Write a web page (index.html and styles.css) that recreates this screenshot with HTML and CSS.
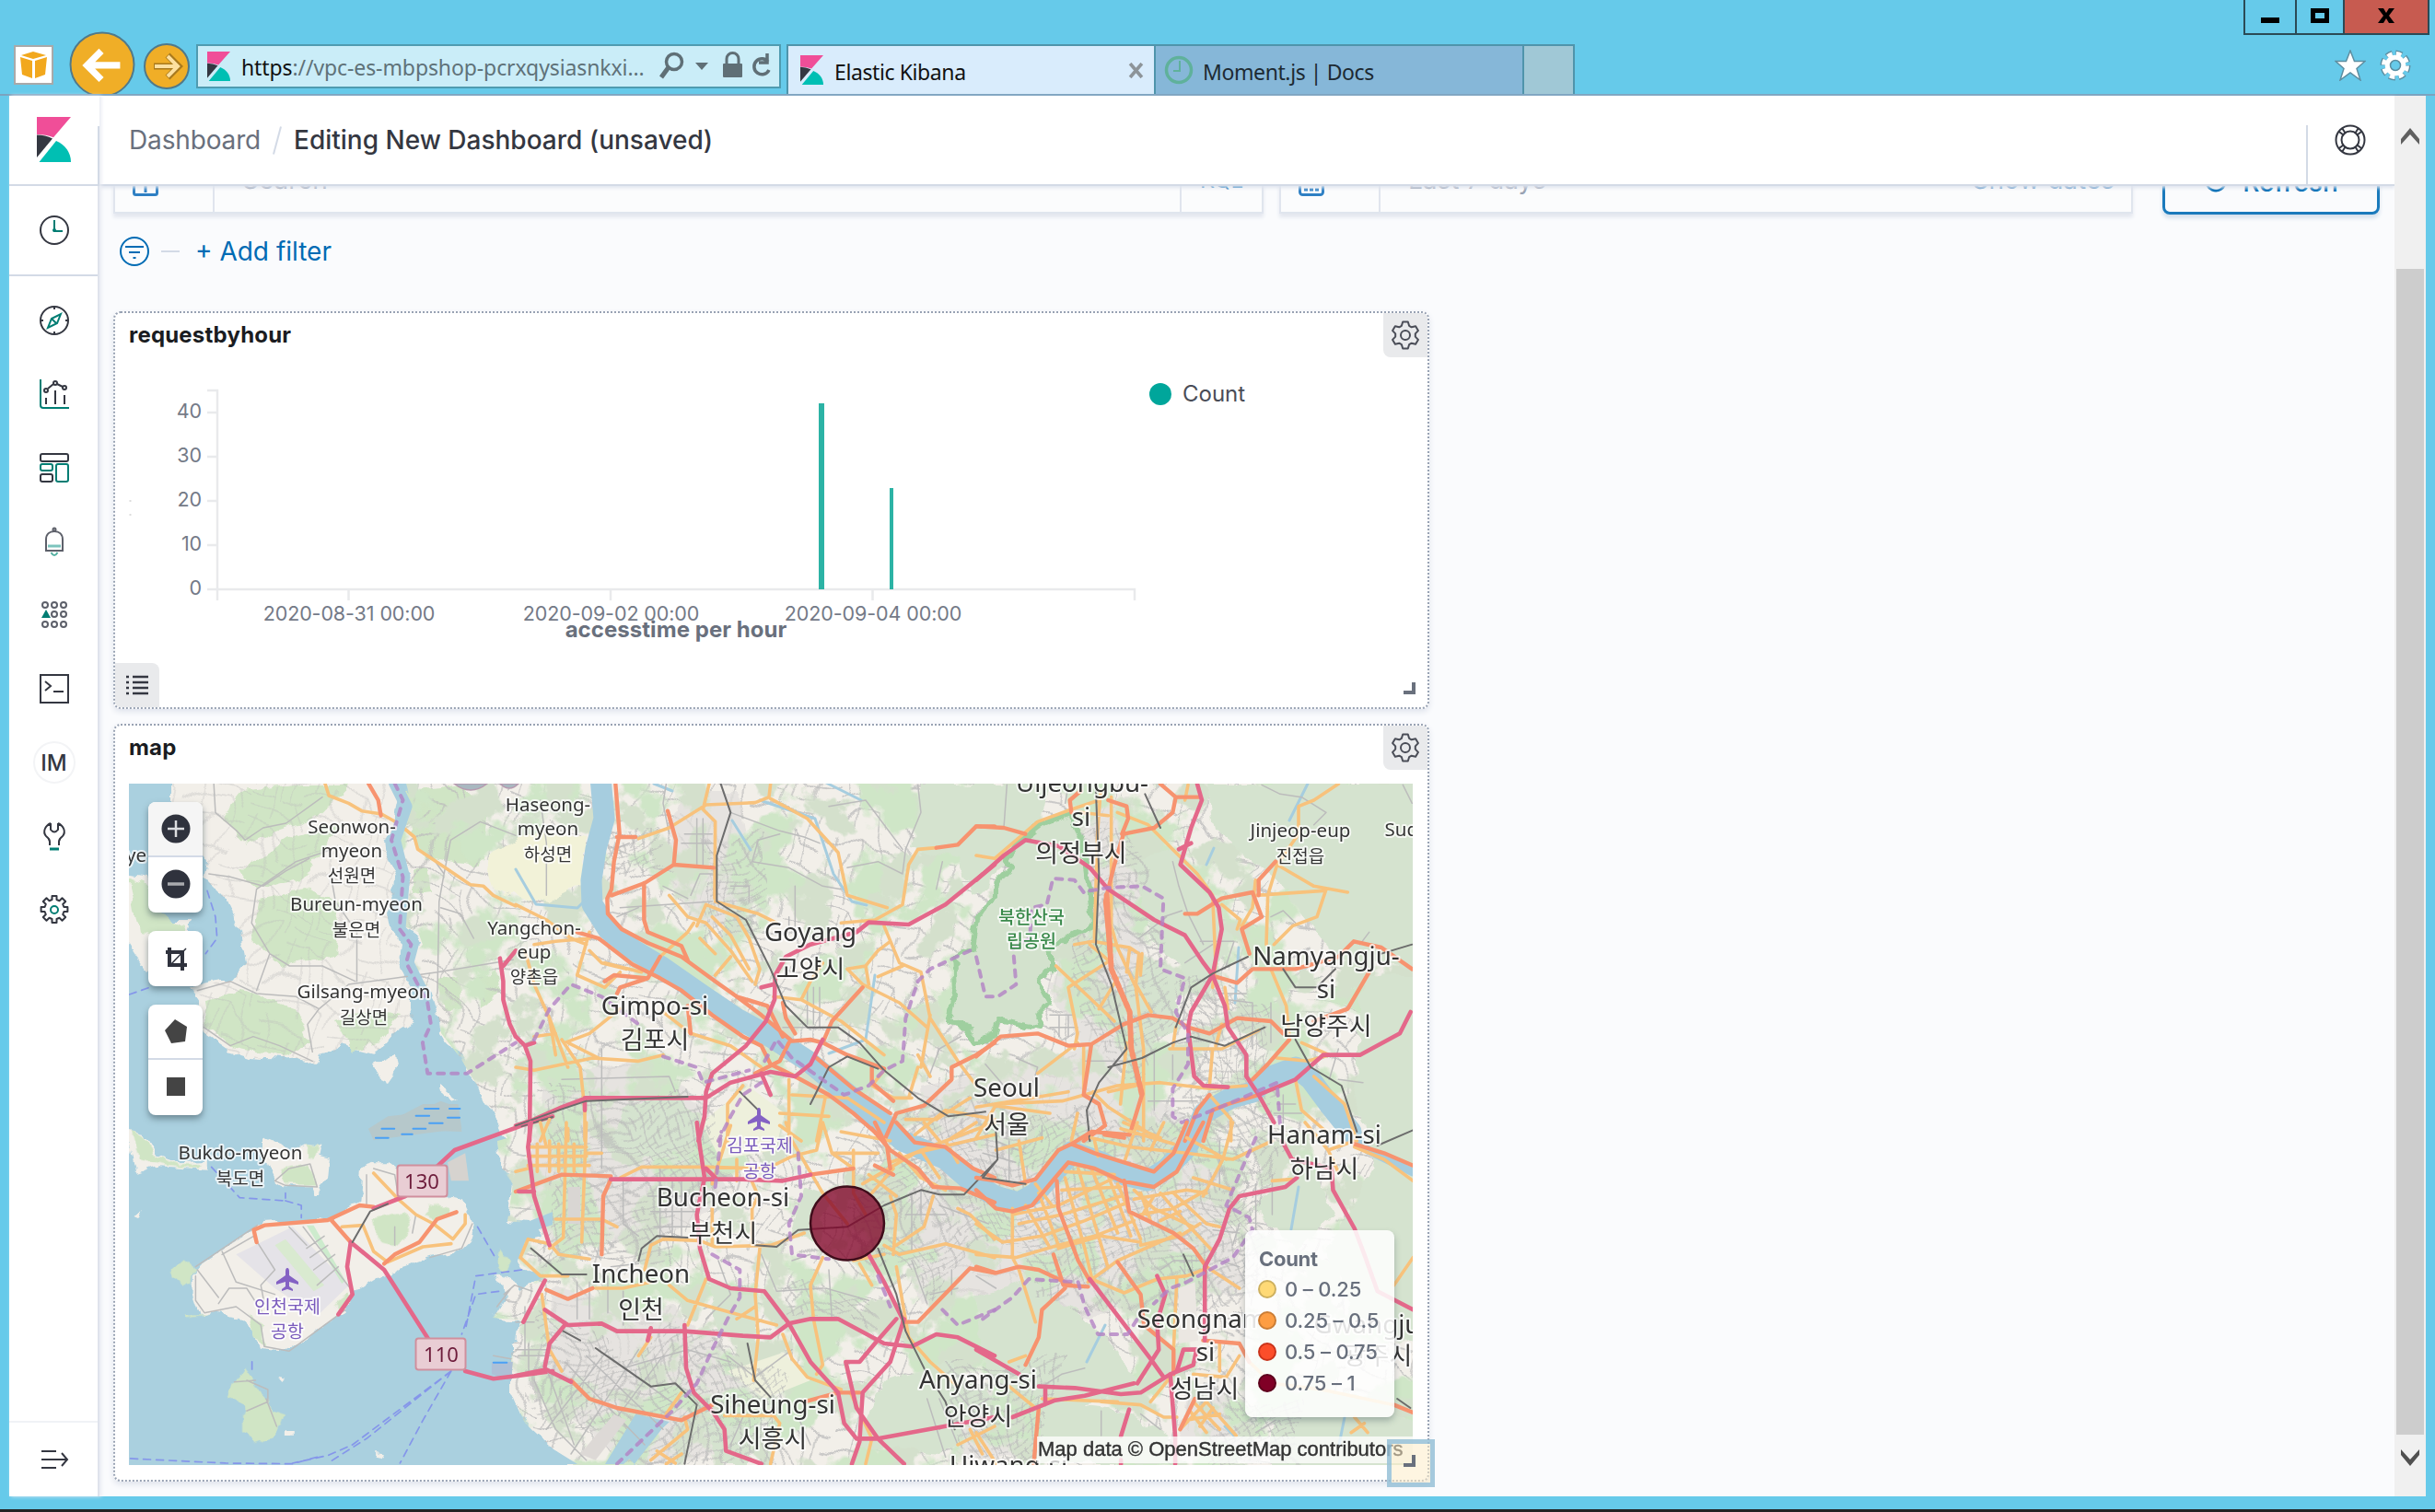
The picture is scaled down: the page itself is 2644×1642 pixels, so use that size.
FILE: index.html
```html
<!DOCTYPE html>
<html lang="en">
<head>
<meta charset="utf-8">
<title>Elastic Kibana</title>
<link rel="stylesheet" href="styles.css">
</head>
<body>
<svg class="defs" width="0" height="0" aria-hidden="true">
  <symbol id="kibana" viewBox="0 0 37 49" preserveAspectRatio="none">
    <path fill="#f04e98" d="M0 0H37L18 22.300Q9.500 19 0 19Z"/>
    <path fill="#343741" d="M0 19.500Q9.500 19.500 17 23.500L0 44Z"/>
    <path fill="#00bfb3" d="M21 26C31 30 37 39 37 49H2.500Z"/>
  </symbol>
  <symbol id="gear" viewBox="0 0 32 32">
    <g fill="none" stroke="#4a4d57" stroke-width="2" stroke-linejoin="round">
      <path d="M13.200 1.500h5.600l1.300 4.300 2.600 1.500 4.400-1 2.800 4.800-3.100 3.300v3.200l3.100 3.300-2.800 4.800-4.400-1-2.600 1.500-1.300 4.300h-5.600l-1.300-4.300-2.600-1.500-4.400 1-2.800-4.800 3.100-3.300v-3.200L2.100 11.100l2.800-4.800 4.400 1 2.600-1.500z"/>
      <circle cx="16" cy="16" r="5"/>
    </g>
  </symbol>
</svg>

<header class="titlebar">
  <svg class="aws" viewBox="0 0 43 43"><rect x="1" y="1" width="41" height="41" fill="#fff" stroke="#a9a9a9" stroke-width="2"/><path fill="#f2a81d" d="M8 11l13-4 14 4-14 4zM7 13l13 4v19L9 32zM36 13l-13 4v19l11-4z"/></svg>
  <svg class="back" viewBox="0 0 74 70"><circle cx="37" cy="37" r="35.500" fill="#f0ae27" stroke="#50798a" stroke-width="2"/><path d="M57 38H22M36 22L20 38l16 16" fill="none" stroke="#fff" stroke-width="7.500"/></svg>
  <svg class="forward" viewBox="0 0 50 52"><circle cx="25" cy="26" r="24" fill="#f0ae27" stroke="#50798a" stroke-width="2"/><path d="M11 26h25M26 14l12 12-12 12" fill="none" stroke="#a8791d" stroke-width="7"/><path d="M12 26h25M26 15l11 11-11 11" fill="none" stroke="#fde0a0" stroke-width="4"/></svg>
  <div class="address">
    <svg class="fav"><use href="#kibana"/></svg>
    <span class="url"><b>https</b>://vpc-es-mbpshop-pcrxqysiasnkxi...</span>
    <svg class="tools" viewBox="0 0 124 34" fill="none" stroke="#5f6f76">
      <circle cx="16" cy="12" r="8.500" stroke-width="3.500"/><path d="M10 18L2 29" stroke-width="5"/>
      <path d="M39 13h14l-7 8z" fill="#5f6f76" stroke="none"/>
      <rect x="69" y="14" width="21" height="15" rx="1" fill="#5f6f76" stroke="none"/><path d="M73 15V9a6.500 6.500 0 0 1 13 0v6" stroke-width="3"/>
      <path d="M118 12a8.500 8.500 0 1 0 1 9M117 3v10h-9" stroke-width="3.500"/>
    </svg>
  </div>
  <nav class="tabs">
    <div class="tab active"><svg class="fav"><use href="#kibana"/></svg><span>Elastic Kibana</span><svg class="close" viewBox="0 0 16 16"><path d="M2 1l12 14M14 1L2 15" stroke="#8d9499" stroke-width="3.500"/></svg></div>
    <div class="tab"><svg class="moment" viewBox="0 0 32 32" fill="none" stroke="#5fb19b"><circle cx="16" cy="16" r="13.500" stroke-width="3.500"/><path d="M17 6v11h-7" stroke-width="2"/></svg><span>Moment.js | Docs</span></div>
    <div class="newtab"></div>
  </nav>
  <div class="corner">
    <div class="winbtns">
      <span><svg viewBox="0 0 22 18"><path d="M1 11h20v6H1z"/></svg></span>
      <span><svg viewBox="0 0 22 18"><path d="M1 1h20v16H1zM6 6v6h10V6z" fill-rule="evenodd"/></svg></span>
      <span class="x"><svg viewBox="0 0 22 18"><path d="M2 1h6l3 5 3-5h6l-6 8 6 8h-6l-3-5-3 5H2l6-8z"/></svg></span>
    </div>
    <div class="tools2">
      <svg viewBox="0 0 34 34"><path d="M17 1l4.500 11.500H33l-9 8 4 12.500-11-8-11 8 4-12.500-9-8h11.500z" fill="#fff" stroke="#5d8ea1" stroke-width="1.500"/></svg>
      <svg viewBox="0 0 34 34"><circle cx="17" cy="17" r="13" fill="none" stroke="#5d8ea1" stroke-width="7" stroke-dasharray="6.500 3.710"/><circle cx="17" cy="17" r="12.500" fill="none" stroke="#fff" stroke-width="5" stroke-dasharray="5.500 4.317" stroke-dashoffset="-.5"/><circle cx="17" cy="17" r="8.500" fill="none" stroke="#fff" stroke-width="5.500"/><circle cx="17" cy="17" r="5.500" fill="#66caea" stroke="#5d8ea1" stroke-width="1.500"/></svg>
    </div>
  </div>
</header>

<div class="window">
  <aside class="sidebar">
    <div class="logo"><svg><use href="#kibana"/></svg></div>
    <div class="recent"><svg viewBox="0 0 32 32" fill="none" stroke="#343741" stroke-width="2"><circle cx="16" cy="16" r="15"/><path d="M16 5v12h9" stroke="#017d73"/><circle cx="16" cy="16" r="2" fill="#017d73" stroke="none"/></svg></div>
    <div class="apps">
      <svg viewBox="0 0 32 32" fill="none" stroke="#343741" stroke-width="2"><circle cx="16" cy="16" r="15"/><path d="M16 1v3M16 28v3M1 16h3M28 16h3"/><path d="M23 9l-4 10-10 5 4-10zM13 14l5 5" stroke="#017d73"/></svg>
      <svg viewBox="0 0 32 32" fill="none" stroke="#343741" stroke-width="2"><path d="M1 0v28q0 3 3 3h28" stroke="#017d73"/><circle cx="7" cy="12" r="2"/><circle cx="17" cy="4" r="2"/><circle cx="27" cy="9" r="2"/><path d="M9 10l6-5M19 5l6 3M7 20v7M17 12v15M27 17v10"/></svg>
      <svg viewBox="0 0 32 32" fill="none" stroke="#343741" stroke-width="2"><rect x="1" y="1" width="30" height="8" rx="2"/><rect x="1" y="12" width="13" height="7" rx="2" stroke="#017d73"/><rect x="18" y="12" width="13" height="19" rx="2" stroke="#017d73"/><rect x="1" y="23" width="13" height="8" rx="2"/></svg>
      <svg viewBox="0 0 32 32" fill="none" stroke="#5d606a" stroke-width="2"><path d="M6 26h20M7 26V14C7 8 11 5 16 5s9 3 9 9v12"/><circle cx="16" cy="3" r="1.500"/><path d="M9 21h14" stroke="#7cc4bd" stroke-width="3"/><path d="M12.500 28q3.500 6 7 0" stroke="#4fae9f"/></svg>
      <svg viewBox="0 0 32 32" fill="none" stroke="#5d606a" stroke-width="2"><circle cx="6" cy="5" r="3"/><circle cx="16" cy="5" r="3"/><circle cx="26" cy="5" r="3"/><circle cx="16" cy="15" r="3"/><circle cx="26" cy="15" r="3"/><circle cx="6" cy="26" r="3"/><circle cx="16" cy="26" r="3"/><circle cx="26" cy="26" r="3"/><path d="M7 10l5 9H2z" fill="#017d73" stroke="none"/></svg>
      <svg viewBox="0 0 32 32" fill="none" stroke="#343741" stroke-width="2"><rect x="1" y="1" width="30" height="30"/><path d="M6 8l6 5-6 5M15 19h11"/></svg>
      <div class="avatar">IM</div>
      <svg viewBox="0 0 32 32" fill="none" stroke="#343741" stroke-width="2"><path d="M12 2C6 5 3 11 7 16q4 3 4 6v4M20 2c6 3 9 9 5 14q-4 3-4 6v4M12 2v7q4 5 8 0V2"/><path d="M11 30h10" stroke="#017d73" stroke-width="3"/></svg>
      <svg viewBox="0 0 32 32" fill="none" stroke="#343741" stroke-width="2" stroke-linejoin="round"><path d="M13.500 1h5v4l3 1.200 3-2.900 3.700 3.700-3 3 1.200 3h4v5h-4l-1.200 3 3 3-3.700 3.700-3-2.900-3 1.200v4h-5v-4l-3-1.200-3 2.900L3.800 24l3-3-1.200-3h-4v-5h4l1.200-3-3-3 3.700-3.700 3 2.900 3-1.200z"/><circle cx="16" cy="16" r="4" stroke="#017d73"/></svg>
    </div>
    <div class="expand"><svg viewBox="0 0 32 24" fill="none" stroke="#343741" stroke-width="2"><path d="M2 3h16M2 12h27M2 21h16M24 5l6 7-6 7"/></svg></div>
  </aside>

  <div class="app">
    <div class="topnav">
      <div class="crumbs"><span class="c1">Dashboard</span><i></i><span class="c2">Editing New Dashboard (unsaved)</span></div>
      <div class="help"><svg viewBox="0 0 34 34" fill="none" stroke="#343741" stroke-width="2"><circle cx="17" cy="17" r="15.500"/><circle cx="17" cy="17" r="9.500"/><path d="M8 4l4 6M5 8l5 4M26 4l-4 6M29 8l-5 4M8 30l4-6M5 26l5-4M26 30l-4-6M29 26l-5-4"/></svg></div>
    </div>
    <main class="content">
      <div class="querybar">
        <div class="field query"><div class="cell ic"><svg viewBox="0 0 28 30" fill="none" stroke="#2e80c4" stroke-width="3"><rect x="1.500" y="1.500" width="25" height="27" rx="2"/><path d="M14 18v8"/></svg></div><div class="cell grow">Search</div><div class="cell kql">KQL</div></div>
        <div class="field date"><div class="cell ic"><svg viewBox="0 0 28 30" fill="none" stroke="#2e80c4" stroke-width="3"><rect x="1.500" y="1.500" width="25" height="27" rx="3"/><path d="M6 23h16" stroke-dasharray="4 2"/></svg></div><div class="cell grow">Last 7 days</div><div class="show">Show dates</div></div>
        <div class="refresh"><svg viewBox="0 0 30 30" fill="none" stroke="#006bb4" stroke-width="3"><path d="M25 9a12 12 0 1 0 2 8"/></svg>Refresh</div>
      </div>
      <div class="filters">
        <svg viewBox="0 0 32 32" fill="none" stroke="#006bb4" stroke-width="2"><circle cx="16" cy="16" r="15"/><path d="M6 11h20M10 17h12M14.500 23h3"/></svg>
        <i></i><span>+ Add filter</span>
      </div>

      <section class="panel chart">
        <header><h2>requestbyhour</h2><button><svg><use href="#gear"/></svg></button></header>
        <svg class="plot" viewBox="125 388 1422 380">
          <g fill="none" stroke="#e9eaec" stroke-width="2.500"><path d="M225 424H236V652M225 448h11M225 496h11M225 544h11M225 592h11M225 640H1232V652M378.500 640v12M663 640v12M947.500 640v12"/></g>
          <g fill="#2cb3a5"><path d="M889 438h6v202h-6zM966 530h4v110h-4z"/></g>
          <g class="tick" text-anchor="end"><text x="219" y="454">40</text><text x="219" y="502">30</text><text x="219" y="550">20</text><text x="219" y="598">10</text><text x="219" y="646">0</text></g>
          <g class="tick" text-anchor="middle"><text x="379" y="674">2020-08-31 00:00</text><text x="663.500" y="674">2020-09-02 00:00</text><text x="948" y="674">2020-09-04 00:00</text></g>
          <text class="axis" x="734" y="692" text-anchor="middle">accesstime per hour</text>
          <circle cx="1260" cy="428" r="12" fill="#00a69b"/><text class="leg" x="1284" y="436">Count</text>
          <path d="M141.500 543v2M141.500 558v2" stroke="#ddd" stroke-width="2"/>
        </svg>
        <div class="listbtn"><svg viewBox="0 0 26 24" stroke="#343741" stroke-width="2.500"><path d="M1 3h3M8 3h17M1 9h3M8 9h17M1 15h3M8 15h17M1 21h3M8 21h17"/></svg></div>
        <div class="grip"></div>
      </section>

      <section class="panel geo">
        <header><h2>map</h2><button><svg><use href="#gear"/></svg></button></header>
        <div class="mapbox">
        <svg class="map" viewBox="140 852 1394 740">
          <defs>
            <clipPath id="land"><path id="mainland" d="M441 852L446 870 437 893 432 913 434 933 443 950 445 970 437 993 439 1007 454 1013 459 1027 446 1040 454 1063 468 1077 475 1100 479 1123 500 1150 514 1173 529 1200 546 1217 539 1210 551 1237 540 1240 543 1267 557 1287 551 1327 582 1330 590 1345 570 1350 562 1373 590 1388 566 1400 540 1385 548 1410 535 1432 565 1435 562 1458 555 1460 555 1513 570 1547 597 1572 623 1592H1534V852Z"/></clipPath>
            <clipPath id="isle"><path d="M186 852L421 852 434 870 429 893 418 913 420 930 430 950 429 970 421 993 425 1013 434 1030 432 1043 437 1057 448 1077 448 1093 450 1110 429 1123 418 1137 407 1145 368 1135 364 1143 345 1147 341 1157 325 1150 307 1152 271 1150 250 1143 221 1123 214 1090 204 1075 237 1067 250 1067 266 1047 261 1013 246 980 221 955 225 937 214 913 186 875Z"/></clipPath>
            <filter id="woods" x="0" y="0" width="100%" height="100%" color-interpolation-filters="sRGB"><feTurbulence type="fractalNoise" baseFrequency=".014" numOctaves="5" seed="7"/><feColorMatrix values="0 0 0 0 .81  0 0 0 0 .90  0 0 0 0 .78  14 0 0 0 -7.300"/></filter>
            <filter id="woods2" x="0" y="0" width="100%" height="100%" color-interpolation-filters="sRGB"><feTurbulence type="fractalNoise" baseFrequency=".022" numOctaves="5" seed="21"/><feColorMatrix values="0 0 0 0 .83  0 0 0 0 .88  0 0 0 0 .80  14 0 0 0 -7.700"/></filter>
            <filter id="rough" x="-5%" y="-5%" width="110%" height="110%"><feTurbulence type="fractalNoise" baseFrequency=".05" numOctaves="3" seed="3"/><feDisplacementMap in="SourceGraphic" scale="14" xChannelSelector="R" yChannelSelector="G"/></filter>
            <filter id="warp" x="0" y="0" width="100%" height="100%"><feTurbulence type="fractalNoise" baseFrequency=".012" numOctaves="2" seed="9"/><feDisplacementMap in="SourceGraphic" scale="70" xChannelSelector="R" yChannelSelector="G"/></filter>
            <pattern id="streets" width="78" height="66" patternUnits="userSpaceOnUse" patternTransform="rotate(14)"><path d="M0 8H40L52 20H78M0 34H30M44 40H78M12 0V34M30 20V66M58 0V40M0 54H58V66M68 40V66M40 8V40" fill="none" stroke="#bdbdbd" stroke-width="1.300"/></pattern>
            <pattern id="blocks" width="29" height="25" patternUnits="userSpaceOnUse" patternTransform="rotate(-22)"><path d="M0 4H29M0 12H17M10 19H29M6 0V25M17 4V19M24 0V12" fill="none" stroke="#b9b9b9" stroke-width="1.200"/></pattern>
            <path id="plane" d="M0-12q2 0 2 4v4l10 7v3L2 3v5l4 3v2L0 11l-6 2v-2l4-3V3l-10 3V3l10-7v-4q0-4 2-4z" fill="#8461c4"/>
          </defs>
          <rect x="140" y="852" width="1394" height="740" fill="#aad0df"/>
          <g fill="#f2efe9" filter="url(#rough)">
            <path d="M441 845L446 870 437 893 432 913 434 933 443 950 445 970 437 993 439 1007 454 1013 459 1027 446 1040 454 1063 468 1077 475 1100 479 1123 500 1150 514 1173 529 1200 551 1237 540 1240 543 1267 557 1287 551 1327 582 1330 590 1345 570 1350 562 1373 590 1388 566 1400 540 1385 548 1410 535 1432 565 1435 562 1458 555 1460 555 1513 570 1547 597 1572 623 1600H1550V840Z"/>
            <path d="M186 840L421 840 434 870 429 893 418 913 420 930 430 950 429 970 421 993 425 1013 434 1030 432 1043 437 1057 448 1077 448 1093 450 1110 429 1123 418 1137 407 1145 368 1135 364 1143 345 1147 341 1157 325 1150 307 1152 271 1150 250 1143 221 1123 214 1090 204 1075 237 1067 250 1067 266 1047 261 1013 246 980 221 955 225 937 214 913 186 875Z"/>
            <path d="M135 950L160 955 175 1000 208 1000 205 1015 160 1055 148 1040 135 1020ZM403 1157L430 1145 432 1160 420 1177 410 1172ZM478 1178l20 14-6 2-14-10z"/>
            <g transform="translate(0 1200) scale(.3827 .3333)">
              <path d="M551 535L740 390 940 375 1020 320 1030 210 1060 190 1100 190 1150 230 1270 300 1310 310 1345 390 1330 440 1290 485 1220 500 1140 530 1070 570 1000 620 980 670 820 805 740 795 720 740 670 690 620 680 570 690 550 620Z"/>
              <path d="M350 80L410 95 440 160 510 190 590 185 590 215 450 205 385 230 367 130ZM750 110L790 130 820 160 870 130 905 140 900 170 935 180 930 240 905 255 915 300 895 300 880 265 800 265 780 250 750 180ZM380 360l30-14-14 22zM815 1065h18v18h-18zM1075 1140l20 4-6 12-16-4zM792 890l24 6-16 6z"/>
            </g>
          </g>
          <g fill="#d0e5c5" filter="url(#rough)">
            <path d="M238 890L262 860 330 852H380L345 890 300 905 268 920 245 895ZM262 945l60-38 50-12-45 60-50 14zM280 980l50-14 40 14-6 60-56 10-34-30zM223 1085l40-8 60 20 15 35-30 18-60-14-22-20zM365 1110l40-12 30 6-22 30-30 8zM440 860l60-8 30 30-10 60-60-10-18-38zM448 945l16 0 4 25-18 2zM475 1065l24-4 2 35-20 4zM140 955l20 6 10 30 34 16-4 18-50-10zM519 1060l20-4 4 20-20 20z"/>
            <g transform="translate(0 1200) scale(.3827 .3333)"><path d="M370 85l40 15 20 60 80 35 60 0-10 15-90-10-80-20zM870 130l30 10-10 40-20-10zM800 210l80-20 15 70-85 0zM490 540l30-30 30 25-5 40-30 15-20-20zM530 685l60 0-60 10zM690 860l25 40 45 60 10 40 40 15-10 35-25 35-50 20-35-40 0-70-25-30-20-5 20-50zM1060 370l90-20 20 60-40 45-60-10zM700 680l50 40 5 70-30-30zM945 650l35-30 10 25-30 20zM1210 320l60 20-20 40-40-20zM1410 490l15-20 20 40-15 40-20-15z"/></g>
          </g>
          <g clip-path="url(#land)">
            <g clip-path="url(#land)"><rect x="100" y="800" width="1480" height="840" fill="url(#streets)" filter="url(#warp)"/></g>
            <g fill="#e2dfdc" opacity=".7" filter="url(#rough)"><path d="M590 1170l120-20 60 60 20 90-60 40-130 20-30-60zM600 1400l130 20 110 90-40 70-120 10-90-80zM740 860l60 0 20 130-60 20-40-60zM1000 1180l180-40 140 100 30 160-230 40-110-80zM1170 870l60 0 20 250-50 60-60-100zM960 1280l100 20 50 100-110 20zM1040 1500l80 20 0 60-90 10zM1290 1500l60 20 20 70-90-10z"/></g>
            <rect x="140" y="840" width="1400" height="760" filter="url(#woods)"/>
            <rect x="140" y="840" width="1400" height="760" filter="url(#woods2)"/>
            <g fill="#d5e3cf" filter="url(#rough)">
              <path d="M1000 852h140l-20 60-60 60-20-40-50-10zM1230 940l50-20 60 100-30 60-60-60zM1240 1040l40 20 0 60-40 20-20-60zM1310 852h230v200l-90-10-60-80-70-60zM1480 1060h60v400l-70-30-30-70 50-90-20-90zM1360 1310l60-50 30 60-40 40zM1060 1410l60-20 80 60 40 60-80 20-90-30zM960 1500l70-20 50 40-60 60-90-10zM1130 1520l80 10 60 30-10 30h-130zM680 1200l60-10 30 40-60 30-50-10zM770 1390l50 20 0 50-40-10zM1380 1530l80-20 80 40v50h-160zM870 1290l30 10-10 50-30-10zM760 1550l50 0 10 40h-40z"/>
            </g>
            <path d="M525 932l60-30 50 10 0 50-40 20-60-14z" fill="#f2f2d8" filter="url(#rough)"/>
            <path d="M762 1220l50-40 40 30-10 40-60 10zM790 1490l60-20 30 30-50 20z" fill="#eef0dc"/>
            <g filter="url(#warp)"><path d="M600 1190h180v120h-60v70h-120zM730 1440l140 60-30 90h-150l-90-90zM960 1200h230v160h-140l-40 60-80-80zM1090 1220h290v200h-260zM1170 900h60l40 220-40 60-60-60zM1270 1080h120v180h-80zM1040 1480h110v110h-110zM1310 1510h110v90h-110zM770 900h60v120h-60zM580 1430l70 20 60 120h-70l-70-60zM860 1400h80v40h-80zM660 900h60v60h-60z" fill="url(#blocks)"/></g>
          </g>
          <g clip-path="url(#isle)"><rect x="100" y="800" width="500" height="400" fill="url(#streets)" filter="url(#warp)" opacity=".45"/></g>
          <path d="M1080 973L1062 1000 1057 1030 1035 1040 1037 1075 1030 1113 1050 1117 1060 1132 1080 1125 1085 1108 1130 1117 1127 1103 1140 1090 1128 1067 1140 1053 1140 1037 1163 1017 1187 1003 1183 967 1178 930 1163 883 1127 897 1110 910 1090 937 1100 943 1080 963Z" fill="#d3e2cd" stroke="#9fcf9f" stroke-width="6" stroke-linejoin="round" filter="url(#rough)"/>
          <g class="ln water">
            <path class="han" d="M652 845L656 890 647 923 642 957 643 983 660 1010 687 1032 717 1050 760 1080 800 1107 837 1127 877 1153 913 1183 950 1213 980 1240 1027 1260 1053 1283 1081 1300 1106 1307 1124 1297 1146 1273 1164 1252 1196 1263 1221 1277 1246 1283 1267 1270 1289 1247 1303 1220 1307 1210 1337 1193 1360 1187 1380 1170 1407 1160 1423 1173 1443 1200 1467 1230"/>
            <path stroke-width="9" d="M1465 1225L1485 1250 1534 1274"/>
            <path d="M560 945l22 38 45 4 14-14M710 852l20 8M795 892l20 32M825 870l60 20 20 60 20 30 16 4M950 1060l-10 70-40 15M1420 852l-20 40M1310 940l8-18M1345 1030l-4 60M1410 1290l-8 46M1200 1440l-20 40M1330 1550l10 10M1460 1540l-6 30M885 845l50 25"/>
          </g>
          <path d="M690 1592l-10-10 14-44 30 8-36 46zM560 1333l40-16 0 14-30 10zM560 1532l14 30-14 0z" fill="#aad0df"/>
          <path d="M560 1530L567 1543 593 1570 627 1591 560 1591ZM657 1591L690 1537 727 1545 677 1591Z" fill="#aad0df"/>

          <g class="ln" transform="translate(0 780) scale(.35714 .33333)">
            <path class="minor" d="M650 215L655 310 720 370 745 400 800 360 870 345 980 260M635 510L700 520 800 550 870 500 940 460M780 560L765 670 820 770 880 810 980 810 1080 860M1085 700V860M820 770L780 890M600 890L700 860 780 900 900 910 970 950 1060 870 1200 850 1330 830 1560 790M1330 900L1335 600 1350 510 1310 450M1350 510L1370 400 1460 340 1568 385M1340 620L1400 640 1440 720M970 950L935 1000 950 1090M780 560L900 470 1010 430M620 1010L700 1070 770 1040 850 1070 950 1120M1085 700L1020 600 1010 540"/>
            <path class="yellow" d="M988 215L1000 255 1060 280 1100 305 1160 315 1210 345 1260 390 1270 430 1340 480 1430 545 1470 550 1500 580 1568 615"/>
            <path class="trunk" d="M1120 215L1150 270 1158 320"/>
            <path class="motor" d="M1520 785L1530 860V920L1550 1000 1568 1040M1568 760L1530 810"/>
            <path class="river2" d="M1200 215L1235 290 1200 400 1228 520 1215 690 1255 740 1240 800 1300 930"/>
            <path class="border" d="M1200 215L1225 270 1190 400 1225 520 1215 690 1250 740 1235 800 1300 930 1310 1000 1285 1060 1300 1160 1420 1160 1568 1060"/>
            <path class="ferry" d="M630 565L655 650 660 720 625 770M393 903L460 878"/>
            <path d="M1120 1340l60-40 80-10 80-40 50 20 14 80z" fill="#b6c8cb"/>
          </g>
          <g class="ln" transform="translate(0 1200) scale(.3827 .3333)">
            <path d="M1045 80L1100 60 1200 0H1300L1310 80 1140 105 1060 118Z" fill="#b6c8cb"/>
            <path d="M1270 190l50-30 10 90-50 0z" fill="#d6d3cf"/>
            <path d="M1395 840h60l-5 60-55-20z" fill="#aec0d6"/>
            <path class="mud" d="M1205 15h40M1275 15h30M1180 38h38M1270 44h34M1218 62h38M1083 80h36M1172 80h36M1066 110h36M1140 98h30M1400 842h38"/>
            <path d="M670 490L830 400 990 590 900 690 780 600Z" fill="#e5e3e8"/><path d="M780 460l30-20 110 150-30 20z" fill="#d9ead0"/><path d="M870 395l20 0 90 180-10 10z" fill="#cdebcd"/>
            <path class="minor" d="M555 530L730 395M560 540L620 630M555 560L555 640 580 680 670 660 740 720 750 790 820 805 980 670M630 480L670 580 780 620M620 650L650 600 700 600 745 680M730 450L780 540 740 590 750 650M860 400L1000 610M630 490L720 430M820 400l50 60M870 470l50-40M880 500l50-40M890 540l60-50M900 590l60-60M1040 230V330M1060 210L1120 230 1130 300M1120 400v60M1170 420l10-60M1220 500l90-30 30-80M700 900l60 30 0 40-60 30M665 905l60-5M755 960l30 90M780 250l40-40 60-15 20 75-90-5zM1500 780V880M1470 820H1568M1400 820l50 10M1430 620l30-30 50 20M1410 660l40-60"/>
            <path class="yellow" d="M1060 225L1130 310 1180 360 1230 390 1285 440 1320 390V360M970 400L1030 395 1060 480 1100 515 1200 465 1280 455"/>
            <path class="trunk" d="M728 450L720 410 750 395 930 378 1020 330 1060 335M940 378L995 450M1090 520L1120 490 1190 450 1240 375 1295 352"/>
            <path class="motor" d="M1568 40L1480 70 1290 150 1150 300 1060 340M995 450L985 530 1000 620 960 685M995 450L1090 540 1215 765M1320 870L1400 895 1470 885 1568 870"/>
            <path class="rail" d="M1568 42L1480 72M1100 325L1050 350 1000 450"/>
            <path class="ferry" d="M600 205L680 305 810 315V290M810 315L855 330V370M1355 400L1405 500M1480 540L1350 560 1320 740M1415 610L1350 620 1310 750M1280 870L1000 1110 930 1145 830 1170M1280 870L1040 1090 930 1170M1280 870L1200 1030 1135 1170M370 1155L640 1170 830 1172 900 1150M715 840V870"/>
          </g>

          <g class="ln" transform="translate(560 840) scale(.33333)">
            <path class="minor" d="M490 37L480 100 500 200M700 130L860 190 940 210 990 230M770 290L790 220 860 200M770 290L890 310 1000 370 1060 380M1020 110L1140 90 1260 250M1310 40L1320 130 1270 250 1260 330M1080 310L1180 290 1260 330M340 440L640 420M480 370L560 410M700 370H760V420M150 1000L500 990 520 1040M280 900V1190M330 470L400 440M910 370V500M890 470V500M1390 290L1370 380M870 830H1010M950 700V820M970 700V820M990 700V830M1450 860L1380 900 1350 980M550 200H640M540 230H640M590 150V300M610 150V300M570 400L600 330 640 330M320 250L370 230M100 400V230L80 90M0 900L60 870"/>
            <path class="yellow" d="M830 37L825 80 780 98 620 105 500 180 400 215M630 37L610 120 650 160 648 410M830 85L950 150 1050 260 1080 400 1210 440M1370 245L1310 250 1280 300 1260 430 1170 480 1060 490M500 400L560 470 620 490 700 580 770 680M590 500L620 430 720 470 760 540 795 640 780 690M600 540L650 590M650 420L790 460 850 490M580 490L560 520 470 600M640 470L700 530 760 640M700 600L650 660M840 730L930 740 1060 810 1200 920M1080 640L1130 690 1250 750 1340 830M1200 500L1250 620 1320 650 1350 800 1440 940 1500 1020M1080 640L1140 630 1180 580 1220 550M1140 630L1150 690M1180 665L1260 630M0 430L100 480 180 540 230 560M30 580L60 690 110 800 170 960M0 960L60 970 250 930 400 940 480 920M150 870L210 960 225 1100V1200M160 880L240 850 340 770M170 880L270 930M480 780L570 850 700 890 800 960M60 560L130 550 240 540M240 520L200 660 290 700 340 650M240 580L280 620 360 640M290 620L410 650M60 860L130 850M110 800L130 920M890 1000V1200M860 1110L1020 1120M900 1050L1080 1060 1200 1140M980 1200L1010 1050M1200 970L1160 1020 1230 1060 1290 1060M1310 960L1280 1060M1350 990L1310 920M1270 1130L1370 1130 1480 1060M1300 1180L1400 1100 1560 1130M1420 1190L1500 1140M80 1200L110 1130M170 1160V1200M690 1200V1080L740 1020M930 740L960 680 1000 620M1350 790L1320 960M860 1150L930 1200"/>
            <path class="trunk" d="M325 37L338 200 320 290 312 380 298 410 300 460 345 510 430 555 540 600 650 680 720 730 800 790 900 875 960 870 1000 880 1080 920 1200 965M312 400L420 360 515 300 645 310M515 300L522 220 495 125M418 360V480L430 520 540 565 560 610M200 520L270 540 380 625 470 670 540 710 640 790 740 860 800 890 830 950 910 990 1020 1050 1100 1110 1180 1180M470 600L430 670 340 700 330 720M430 670L320 660 290 680M560 760L570 850M330 210H390M1560 175H1500L1440 235 1370 245M1560 880L1500 920 1420 960V1000L1330 1085 1240 1110 1200 1200M890 880L860 940 780 980M720 730L820 760 870 860M980 930L1100 1030 1220 1110M1130 700L1030 810 1000 880M870 750L880 800 910 850M1160 960V1010L1230 1070"/>
            <path class="motor" d="M1560 300L1400 430 1280 495 1150 488 1110 520 960 560 880 600 845 660 843 740 815 810 750 890 640 980 620 1040 615 1120 595 1200M1000 870L960 950 910 990 830 975 700 1010 620 1060 230 1060 150 1090 60 1130 0 1150M0 860L30 890 48 940 45 1200M800 980L830 1050M800 700L840 690M225 1060V1100M30 890L60 880"/>
            <path class="rail" d="M668 37L700 130 655 270V420L750 480 830 640 880 760 950 830H1050L1120 880 1200 970 1310 1060 1410 1120 1530 1105M960 1080L1020 960 1080 925 1180 965M560 1056L230 1070 140 1100 0 1150M730 1040L790 1100"/>
            <path class="border" d="M1480 580L1350 640 1310 680 1270 800 1260 940 1200 970 1150 1020 1070 1050 900 930 850 870 800 960M480 925L590 960 610 1010 760 970M60 870L110 770 180 690 280 730 400 820M800 1010L740 1050 700 1120 660 1200"/>
          </g>

          <g class="ln" transform="translate(1060 840) scale(.33333)">
            <path class="minor" d="M100 40L90 180M300 40L290 100M640 290L660 370 690 460 740 560M610 470L670 450M530 540L620 470M930 40L990 70 1060 80 1140 130 1100 170M1390 40L1420 100M730 550H840L810 640M960 470L1000 450 1040 490M680 620L770 560M780 720H880M820 740L900 750V900M960 750V880M1180 1000L1260 1010M580 910V1100M640 920V1000M560 1070H720M130 930L200 960 180 1030M30 950L90 1020M240 790H320M240 830H330M270 790V860M300 790V860M980 1080H1040M970 1110H1060M1000 1050V1170M1280 520L1250 560M1150 1000L1180 900M430 800L470 850M350 940H480"/>
            <path class="yellow" d="M0 270L60 280 200 160 310 120 400 90M405 60L395 200 385 540M440 80V500L460 570 520 700 545 900V1200M460 130L560 170 650 260 720 330 770 400 780 620 770 700M320 560L380 550 500 570 530 590 520 690 570 780M260 630L450 810M440 610L300 700 330 850 320 900M370 560L440 620M500 570L490 650M540 590L535 660M460 670L400 770M1180 37L1100 90 1050 110V200L980 300 950 400 945 560M980 300L1100 370 1210 390M1140 380L1110 470 1030 500 970 560M910 400L1130 385M800 430L860 480 850 510M630 900L800 900 920 840M770 900L760 1020M960 640L1010 760 1020 860M330 880L200 980M0 1090L60 1080 280 1070 460 1020 600 1010 760 1030 880 1020M60 1080L300 1040M60 1085L240 1110M350 890V1040M430 1040L520 1020M1040 1000L1060 1100 1140 1170M1100 990L1200 1080 1240 1200M910 350L900 440 865 500M690 40L680 90M340 130L430 140M650 830L640 900M800 820L780 890M810 700L820 770M490 880L470 1080M380 1040L430 1090 570 1180M480 1140L600 1190M760 1050L830 1130V1200M980 930L1080 940 1150 920 1060 880M60 1090L0 1190M330 1110L310 1200"/>
            <path class="trunk" d="M0 175L90 180 160 200M310 130L305 90 340 60M600 37L650 80 640 130 580 180 480 200 450 300 420 420 440 640 500 780 505 900 540 1050 500 1180 380 1170M650 80H730M430 90L490 110 495 150 475 200M0 925L80 860 200 850 300 890 375 885 480 820 560 790 640 800 690 830 760 850 850 800 960 810 1000 850M375 885L350 1050 400 1080 420 1150 350 1200M680 460L720 460 800 410 900 390 930 470 865 510 890 590M975 290L920 350V400M780 665L850 685 900 640 1040 640 1180 600 1230 550 1320 570 1420 640M1280 650L1210 770 1100 810M1020 870L950 950 900 1000M680 1200L720 1100 760 1050M740 1200L770 1100 820 1080 920 1050"/>
            <path class="wide" d="M425 400L440 640 500 780 505 900 540 1050"/>
            <path class="motor" d="M720 37L735 90 700 180 665 300 760 390 790 440 800 510 770 660 700 780 690 830 710 990 740 1020 820 1025M0 350L90 270 160 220 270 240 370 310 430 380 580 480 680 530 740 620 770 660 810 760 820 830 880 920V990L920 1050 970 1140M920 1050L1040 1000 1130 920 1250 920 1380 850 1415 780M700 230L660 250"/>
            <path class="rail" d="M390 60L400 330 390 560 440 690 490 900 400 1010 360 1100 370 1200M885 600L770 655 700 700 650 830M540 930L640 880 700 860 810 890 940 830M540 930L430 960M1000 640L1040 700H1110L1170 640M1040 870L1090 960 1190 1020 1240 1170M550 70L600 180M1320 590L1420 560"/>
            <path class="border" d="M370 385L430 375 540 370 610 410 600 640 680 670 650 780 690 850V950L640 1030V1120L670 1140 820 1080 980 1010 990 1150M350 390L320 350 250 345 230 430 180 440 175 540 120 570 130 690 70 730H30L0 600"/>
          </g>

          <g class="ln" transform="translate(560 1220) scale(.33333)">
            <path class="minor" d="M280 0V150M350 180V330L400 370M470 150V400M510 180V370M540 180V370M430 240H600M440 290H590M450 340H590M310 470L400 460M660 450L700 560 620 640M800 430L850 550 1000 540M1020 480L1030 640M1010 540L1150 580M690 760L780 830 900 740M820 570L870 640M350 800L560 740 700 780M0 740H100M30 600V760M0 650H60M300 500V620M350 550V660M200 520V640M240 520V640M100 800L190 1050M60 840L130 1000 230 1100M160 780L420 1050M230 760L480 1000M300 760L520 920M400 740L180 1080M300 740L100 1000M480 760L300 1000M900 450L960 430M1290 230V420M1320 220V300M1380 270L1540 330M1270 300H1400M1290 450L1340 590M1420 480V560M1350 560L1440 540M1380 900L1440 1050M1340 900L1400 1090M1440 880L1540 1000M1380 1000L1540 900M700 1050L740 960M920 960L960 1050"/>
            <path d="M210 1080l110-130 40 20-100 130z" fill="#ddd9d6"/><path d="M170 210h40v120h-40z" fill="#d9d6d3"/>
            <path class="yellow" d="M15 440L40 380 110 395 140 430 240 445M15 440L80 500 170 500M110 410L155 375 165 0M230 0L215 390M40 80H230M40 110H230M40 140H240M70 70V160M110 60V160M140 70V160M190 70V160M0 160L40 150M80 0L100 80M230 100H280M130 315H280L330 340M340 180L410 145H620L820 150 900 110 980 90M420 480L440 400 480 380 600 385 650 405 830 400 940 360M500 530L560 580 740 630 850 660M620 510L560 660M700 10L640 200M760 170L790 240 770 280V400M795 410L780 560 790 700 775 840M780 600L720 640M870 690L900 770 950 830 1060 870M1000 440L960 530 970 640 1000 790 980 820M640 280V400M720 120V190M880 0L900 60 1000 230 1080 330M1000 0L1030 100 1100 150M980 90L1000 0M1100 90V230L1140 300M1220 130L1400 60 1560 0M1130 200L1300 100 1560 40M1160 230L1230 150M1200 400L1250 430 1400 395 1560 440M1220 240L1240 300 1230 430M1240 470L1280 700 1350 780 1440 860M1100 450L1200 430M1360 240L1330 340 1240 400M1440 280L1480 300 1560 380M1120 460L1160 530M260 540H350L440 520M85 560L110 740 150 810M440 1100L560 1000 550 960M490 1112L540 1080M460 1070L520 1110M680 955L840 955 860 980 830 1112M400 760L440 700M540 880L490 950M1090 880L1160 1030 1140 1112M1440 1050L1560 990M1480 1000L1520 1080M1060 30L1220 60M1030 100L1180 100M1250 100L1320 180 1400 220M1320 90L1380 180M1400 60L1440 130M1330 0L1380 60M1150 170L1240 240"/>
            <path class="trunk" d="M180 840L240 900 330 930 540 970 640 920M250 540L170 575 100 545M280 430L285 240 310 185M0 225L150 170 310 175M960 170L1100 150M1170 0L1210 80 1220 150M1240 0L1300 65 1400 80 1490 150 1560 180M1160 20L1220 90 1310 150 1360 210 1450 215 1560 260M1260 650H1310L1480 475 1560 490M940 910L1050 880 1120 880M1170 140L1230 170"/>
            <path class="motor" d="M590 0L600 80 615 180 590 300 600 410 630 510 700 540 810 550 890 655 960 780 1050 880 1070 980 1110 1030H1180L1560 960M310 185H740L870 190 960 170M620 150L650 180M50 0L40 80 60 240 110 400M95 515L25 650M95 610L170 660 280 655 330 680 550 680 740 695 830 700 890 655 960 640H1050L1200 720 1290 730 1370 690 1440 700 1560 760M0 825L100 805 180 845M160 660L110 720 95 795M550 660L555 800 580 880 640 940 680 1000 685 1070 800 1112M1240 640L1170 720 1120 780H1075L1110 930 1180 1030 1265 1112M1265 640L1220 780 1130 880 1120 1040 1095 1112M1150 430L1200 520 1260 640M430 710L440 670M10 225H60"/>
            <path class="rail" d="M50 410L150 495H230M155 680L210 710M260 735L440 860 520 850 590 920 550 1112M400 450L410 410 460 370 560 375M780 400L850 405 920 350 1080 340 1200 270 1320 220 1380 235H1460L1560 130M1180 410L1240 560 1270 680 1330 800 1400 910 1430 1000M755 720L780 840 830 895"/>
            <path class="border" d="M640 430L730 480V570L690 640 640 740 590 850 510 940 330 1112M920 100L930 240 890 330 900 430 1020 445M1180 500L1220 600M1390 610L1440 660 1560 610M650 210L670 30"/>
          </g>

          <g class="ln" transform="translate(1060 1220) scale(.35714 .33333)">
            <path class="minor" d="M560 480L600 450 680 450M740 60V220M780 400L800 330M720 350L800 360M740 450L800 470M500 950L560 1000M380 940V1020M850 1010L910 970M200 860L260 820 330 800M60 60L150 100M100 60V200M20 100L120 130M200 10V60M0 500L60 540M760 650L800 680M620 470L640 500M850 200V350M900 170V300"/>
            <path d="M615 540l50-20 10 190-60 10z" fill="#ebe7e2"/>
            <path class="yellow" d="M110 300L250 270 420 180M130 330L260 300 440 240M0 330L80 390 200 370 330 320 460 260M0 430L120 440 250 400 360 370 480 320M250 410L380 370 500 390M340 520L430 450 620 360M150 270L220 400M190 230L250 400M270 180L330 410 350 500M310 150L380 400 400 470M350 150L430 360M400 170L470 370M430 200L500 380M110 280V440L130 480M270 160L420 170M260 220L440 210M480 250L560 235 640 220 700 230M500 300L600 280 700 220M480 220L540 280 660 340M560 230L640 330 720 420M500 400L620 370 680 330M600 230L700 330 740 340M500 230L530 320M540 240L500 310M620 290L560 320M130 60L150 200M60 90L200 50M350 50L470 80 640 100 780 120 900 60M490 0L450 130M570 0L530 90M360 60L370 110M780 0L750 120 690 240M660 180L780 220M640 50L760 120M440 20L600 70M900 190L960 185M350 510L450 555 550 510 640 500 690 480M700 470L800 540M130 480L180 650M610 510L600 740M620 1000L700 910 790 1020M660 910L740 1000M640 970L740 950M650 940L700 1010M720 930L680 990M380 910L500 920 570 960H610M0 1010L60 1110M530 910L590 830M100 780L150 760M100 860L180 930M200 900L430 910M1328 440L1270 530M830 780L900 850 1050 870 1270 920M800 760L760 830 660 820M740 720V810M1000 0L1070 90 1150 60M1070 90L1100 160M1150 80L1240 120 1328 190M1140 1010L1180 980M1150 960L1190 1010M180 200L230 270"/>
            <path class="trunk" d="M0 220L60 280 110 290 170 270 240 180 280 130 360 150 440 190 540 210 610 160 690 0M0 180L60 190 110 205 180 185 250 90 290 70 360 100 450 130 540 160 600 100 640 0M290 70L350 30M245 190L250 280 310 450 345 515M450 190L465 290 600 360 660 410 700 470M0 470L60 490 130 470 190 480 290 530M235 430L265 530 340 535M430 455L500 560 510 660 600 740V820M270 540L200 610 190 700 150 790M1150 70L1240 100 1328 140M175 1110L190 930M690 710L800 720 830 780M1270 920L1328 945M665 900L620 1000M390 40L450 50"/>
            <path class="motor" d="M345 510L530 770 570 830M0 740L130 820M190 860L300 865 440 885 500 880 590 820 660 790 670 740H630L610 810M550 500L575 560 550 650 555 740 490 850M110 960L240 905 330 890 480 850M695 710V470L740 380 770 280 800 240 940 210 975 180M930 60L960 120 1080 150 1085 220 1150 345 1180 430 1220 550 1328 610M465 935L440 1022M590 820L605 1022V1112M440 1100v12M210 870v40"/>
            <path class="rail" d="M20 180L150 200M20 180L65 120 60 30M1220 75L1328 25M1280 900L1320 930M630 430L660 500"/>
            <path class="border" d="M850 50L820 120 760 270 830 310 840 350 780 440 640 520 590 540 540 590M20 640L110 570 160 510 310 520 330 600 370 690 460 690 490 640"/>
          </g>

          <g class="small">
            <text x="382" y="906">Seonwon-</text><text x="382" y="932">myeon</text><text class="ko" x="382" y="959">선원면</text>
            <text x="387" y="990">Bureun-myeon</text><text class="ko" x="387" y="1018">불은면</text>
            <text x="395" y="1085">Gilsang-myeon</text><text class="ko" x="395" y="1113">길상면</text>
            <text x="148" y="937">ye</text>
            <text x="595" y="882">Haseong-</text><text x="595" y="908">myeon</text><text class="ko" x="595" y="936">하성면</text>
            <text x="580" y="1016">Yangchon-</text><text x="580" y="1042">eup</text><text class="ko" x="580" y="1069">양촌읍</text>
            <text x="1412" y="910">Jinjeop-eup</text><text class="ko" x="1412" y="938">진접읍</text><text x="1528" y="909">Sudo</text>
            <text x="261" y="1260">Bukdo-myeon</text><text class="ko" x="261" y="1288">북도면</text>
          </g>
          <g class="city">
            <text x="880" y="1023">Goyang</text><text class="ko" x="880" y="1063">고양시</text>
            <text x="711" y="1103">Gimpo-si</text><text class="ko" x="711" y="1140">김포시</text>
            <text x="1175" y="861">Uijeongbu-</text><text x="1174" y="898">si</text><text class="ko" x="1174" y="937">의정부시</text>
            <text x="1440" y="1049">Namyangju-</text><text x="1440" y="1085">si</text><text class="ko" x="1440" y="1125">남양주시</text>
            <text x="1093" y="1192">Seoul</text><text class="ko" x="1093" y="1232">서울</text>
            <text x="1438" y="1243">Hanam-si</text><text class="ko" x="1438" y="1280">하남시</text>
            <text x="785" y="1311">Bucheon-si</text><text class="ko" x="785" y="1350">부천시</text>
            <text x="696" y="1394">Incheon</text><text class="ko" x="696" y="1433">인천</text>
            <text x="839" y="1536">Siheung-si</text><text class="ko" x="839" y="1573">시흥시</text>
            <text x="1062" y="1509">Anyang-si</text><text class="ko" x="1062" y="1549">안양시</text>
            <text x="1095" y="1602">Uiwang-si</text>
            <text x="1309" y="1443">Seongnam-</text><text x="1309" y="1479">si</text><text class="ko" x="1308" y="1519">성남시</text>
            <text x="1489" y="1449">Gwangju-</text><text class="ko" x="1496" y="1483">광주시</text>
          </g>
          <g class="air"><use href="#plane" x="824" y="1216"/><text x="825" y="1252">김포국제</text><text x="825" y="1280">공항</text><use href="#plane" x="312" y="1390"/><text x="312" y="1427">인천국제</text><text x="312" y="1454">공항</text></g>
          <g class="park"><text x="1120" y="1004">북한산국</text><text x="1120" y="1030">립공원</text></g>
          <g class="shield"><rect x="431.500" y="1266.500" width="54" height="34" rx="3"/><text x="458" y="1292">130</text><rect x="451.500" y="1454.500" width="54" height="34" rx="3"/><text x="479" y="1480">110</text></g>
          <path d="M493 852q18 14 36 0zM543 852q10 10 20 0z" fill="#a9b8c0" stroke="#b79bb0" stroke-width="1.500"/>
          <circle cx="920" cy="1329.500" r="40" fill="#800026" fill-opacity=".76" stroke="#3f0d1b" stroke-width="2.500"/>
        </svg>
        <div class="controls">
          <div class="ctl two"><span class="hover"><svg viewBox="0 0 32 32"><circle cx="16" cy="16" r="15.500" fill="#2f323d"/><path d="M7 16h18M16 7v18" stroke="#dcdde0" stroke-width="2.500"/></svg></span><span><svg viewBox="0 0 32 32"><circle cx="16" cy="16" r="15.500" fill="#2f323d"/><path d="M7 16h18" stroke="#a9aaae" stroke-width="3.500"/></svg></span></div>
          <div class="ctl"><span><svg viewBox="0 0 32 32" fill="none" stroke="#2f323d"><path d="M5 9h18v20M9 4v19h19" stroke-width="4"/><path d="M10 23L27 5" stroke-width="1.500"/></svg></span></div>
          <div class="ctl two"><span><svg viewBox="0 0 32 32"><path d="M15 3l13 8-2 16-15 2L4 15z" fill="#444"/></svg></span><span><svg viewBox="0 0 32 32"><path d="M6 6h20v20H6z" fill="#444"/></svg></span></div>
        </div>
        <div class="legend"><b>Count</b>
          <p><i class="l1"></i>0 – 0.25</p><p><i class="l2"></i>0.25 – 0.5</p><p><i class="l3"></i>0.5 – 0.75</p><p><i class="l4"></i>0.75 – 1</p>
        </div>
        <div class="attrib">Map data © OpenStreetMap contributors</div>
        </div>
        <div class="focus"></div><div class="grip"></div>
      </section>
    </main>
  </div>
  <div class="scroll">
    <svg viewBox="0 0 24 20"><path d="M2 19v-6L12 1l10 12v6L12 8z" fill="#606060"/></svg>
    <div class="thumb"></div>
    <svg class="down" viewBox="0 0 24 20"><path d="M2 19v-6L12 1l10 12v6L12 8z" fill="#505050"/></svg>
  </div>
</div>
</body>
</html>
```
FILE: styles.css
```css
* { box-sizing: border-box; }
body {
  margin: 0;
  width: 2644px;
  height: 1642px;
  overflow: hidden;
  display: flex;
  flex-direction: column;
  background: #66caea;
  border-bottom: 3px solid #222;
  font-family: Inter, "Liberation Sans", sans-serif;
  color: #343741;
}
.defs { position: absolute; }
svg { display: block; flex: none; }

/* Browser frame */
.titlebar {
  flex: none;
  height: 104px;
  display: flex;
  align-items: flex-start;
  border-bottom: 2px solid #7ba3bf;
  padding-left: 15px;
  font-family: "Noto Sans", "Open Sans", sans-serif;
}
.aws { width: 43px; height: 43px; margin-top: 49px; }
.back { width: 74px; height: 68px; margin: 34px 0 0 16px; overflow: hidden; }
.forward { width: 50px; height: 52px; margin: 46px 0 0 8px; }
.address {
  width: 635px;
  height: 48px;
  margin: 48px 0 0 7px;
  border: 2px solid #4f9bb0;
  background: #caedf8;
  display: flex;
  align-items: center;
  padding-left: 10px;
}
.address .fav { width: 25px; height: 32px; }
.url { width: 454px; margin-left: 12px; padding-top: 2px; font-size: 23px; letter-spacing: -.1px; color: #5f7279; white-space: nowrap; }
.url b { font-weight: 400; color: #111; }
.tools { width: 124px; height: 34px; }
.tabs { display: flex; margin: 48px 0 0 6px; height: 54px; border: 2px solid #4f94ab; border-bottom: 0; }
.tab { width: 400px; display: flex; align-items: center; background: #86b7d8; border-right: 2px solid #4f94ab; padding-left: 9px; font-size: 23px; letter-spacing: -.4px; color: #1d2a33; }
.tab.active { width: 399px; background: #d9ecfc; padding-left: 13px; color: #111; }
.tab .fav { width: 25px; height: 32px; }
.tab span { margin-left: 12px; padding-top: 3px; flex: 1; white-space: nowrap; }
.close { width: 17px; height: 17px; margin-right: 11px; }
.moment { width: 32px; height: 32px; }
.tab:not(.active) span { margin-left: 10px; }
.newtab { width: 53px; background: #a0c8d6; }
.corner { margin-left: auto; width: 208px; }
.winbtns { display: flex; width: 202px; height: 38px; border: 2px solid #2b4a55; border-top: 0; }
.winbtns span { width: 56px; border-right: 2px solid #2b4a55; display: flex; align-items: center; justify-content: center; }
.winbtns span:nth-child(2) { width: 52px; }
.winbtns .x { flex: 1; border: 0; background: #c75b50; }
.winbtns svg { width: 22px; height: 18px; margin-top: -3px; }
.tools2 { display: flex; gap: 15px; margin: 16px 0 0 99px; }
.tools2 svg { width: 34px; height: 34px; }

/* Kibana */
.window { display: flex; margin: 0 10px; height: 1521px; flex: none; background: #fafbfd; }
.sidebar { width: 98px; background: #fff; border-right: 2px solid #dfe3ec; display: flex; flex-direction: column; flex: none; box-shadow: 2px 0 4px #e8ebf2; z-index: 2; }
.logo { height: 98px; border-bottom: 2px solid #d3dae6; padding: 23px 0 0 30px; margin-right: -2px; background: linear-gradient(#fff, #fff) 0 0 / 100% 33px no-repeat, linear-gradient(90deg, #fff 96px, #d3dae6 96px); }
.logo svg { width: 37px; height: 49px; }
.recent { height: 98px; border-bottom: 2px solid #d3dae6; display: flex; align-items: center; justify-content: center; padding-left: 1px; }
.recent svg, .apps > svg { width: 32px; height: 32px; }
.apps { flex: 1; display: flex; flex-direction: column; align-items: center; gap: 48px; padding: 32px 0 0 1px; }
.avatar { width: 46px; height: 46px; border: 2px solid #f3f4f6; border-radius: 50%; margin: -7px 0; display: flex; align-items: center; justify-content: center; font-size: 24px; font-weight: 500; }
.expand { height: 82px; border-top: 2px solid #f0f2f6; display: flex; align-items: center; justify-content: center; padding-left: 1px; }
.expand svg { width: 32px; height: 24px; }

.app { flex: 1; min-width: 0; display: flex; flex-direction: column; }
.topnav { height: 98px; flex: none; background: #fff; border-bottom: 2px solid #d3dae6; box-shadow: 0 2px 4px #dfe4ee; display: flex; justify-content: space-between; position: relative; z-index: 1; }
.crumbs { display: flex; align-items: center; height: 96px; padding-left: 32px; font-size: 28px; white-space: nowrap; }
.c1 { color: #69707d; width: 150px; letter-spacing: -.15px; }
.crumbs i { width: 2px; height: 31px; background: #d3dae6; transform: rotate(15deg); margin: 0 17px 0 10px; }
.c2 { font-weight: 500; letter-spacing: 0; }
.help { width: 96px; margin-top: 32px; border-left: 2px solid #d3dae6; padding-left: 29px; }
.help svg { width: 34px; height: 34px; margin-top: -1px; }

.content { flex: 1; min-height: 0; overflow: hidden; padding: 0 0 0 15px; }
.querybar { display: flex; height: 80px; margin-top: -50px; font-size: 28px; }
.field { display: flex; background: #fbfcfd; border: 2px solid #e0e5ee; box-shadow: 0 4px 4px #e3e7ef; }
.query { width: 1249px; margin-right: 17px; }
.date { width: 927px; margin-right: 32px; position: relative; }
.cell { display: flex; align-items: center; border-right: 2px solid #e0e5ee; padding-top: 6px; color: #98a2b3; }
.ic { width: 108px; padding-left: 19px; }
.ic svg { width: 28px; height: 30px; margin-top: 5px; }
.grow { flex: 1; padding-left: 30px; }
.kql { width: 87px; border: 0; justify-content: center; color: #006bb4; font-size: 24px; }
.date .grow { border: 0; }
.show { display: flex; align-items: center; color: #5b93c4; padding-right: 18px; padding-top: 6px; }
.refresh { width: 236px; height: 81px; border: 3px solid #1a7abc; border-radius: 8px; color: #006bb4; font-weight: 500; display: flex; align-items: center; justify-content: center; gap: 16px; padding-top: 10px; box-shadow: 0 4px 4px #d4e0ec; }
.refresh svg { width: 26px; height: 26px; margin-top: -4px; }
.filters { height: 80px; margin: 1px 0 25px; display: flex; align-items: center; padding-left: 7px; color: #006bb4; font-size: 28px; }
.filters svg { width: 32px; height: 32px; }
.filters i { width: 20px; height: 2px; background: #d3dae6; margin: 0 17px 0 13px; }

.panel { width: 1429px; background: #fff; border: 2px dotted #98a2b3; border-radius: 8px; box-shadow: 0 3px 6px #dfe3ec; position: relative; display: flex; flex-direction: column; }
.panel header { display: flex; justify-content: space-between; height: 48px; flex: none; }
.panel h2 { margin: 0; padding-left: 15px; font-size: 24px; line-height: 48px; color: #1a1c21; font-weight: 700; letter-spacing: .2px; }
.panel button { width: 48px; height: 48px; border: 0; border-radius: 0 6px 0 8px; background: #e9eaec; padding: 8px; }
.panel button svg { width: 32px; height: 32px; }
.chart { height: 432px; margin-bottom: 16px; }
.plot { width: 1422px; height: 380px; }
.tick { font-size: 21.5px; fill: #747a87; letter-spacing: -.1px; }
.axis { font-size: 24px; font-weight: 700; fill: #69707d; letter-spacing: .05px; }
.leg { font-size: 24px; fill: #4a4d57; }
.listbtn { position: absolute; left: 0; bottom: 0; width: 48px; height: 48px; background: #e9eaec; border-radius: 0 8px 0 6px; padding: 12px 11px; }
.listbtn svg { width: 26px; height: 24px; }
.grip { position: absolute; right: 13px; bottom: 14px; width: 13px; height: 13px; border: solid #69707d; border-width: 0 4px 4px 0; }
.geo { height: 823px; }
.mapbox { position: relative; width: 1394px; height: 740px; margin: 15px 0 0 15px; overflow: hidden; }
.map { width: 1394px; height: 740px; }

.ln path:not([fill]) { fill: none; stroke-linejoin: round; stroke-linecap: round; vector-effect: non-scaling-stroke; }
.water { stroke: #a6cddf; stroke-width: 3; }
.ln .han { stroke-width: 23; }
.ln .river2 { stroke: #a9cfdf; stroke-width: 13; }
.ln .minor { stroke: #bcbcbc; stroke-width: 1.5; }
.ln .yellow { stroke: #f8c27c; stroke-width: 3.6; }
.ln .trunk { stroke: #f7936f; stroke-width: 4.4; }
.ln .wide { stroke: #f7936f; stroke-width: 6; stroke-dasharray: 5 3; }
.ln .motor { stroke: #e4688a; stroke-width: 4.6; }
.ln .rail { stroke: #6c6c6c; stroke-width: 2; }
.ln .border { stroke: #b383c5; stroke-width: 4; stroke-dasharray: 7 8; stroke-linecap: butt; opacity: .8; }
.ln .ferry { stroke: #8596ea; stroke-width: 1.7; stroke-dasharray: 8 6; stroke-linecap: butt; }
.ln .mud { stroke: #4aa0f5; stroke-width: 2; stroke-linecap: butt; }
.small, .city, .air, .park { font-family: "Noto Sans", "Noto Sans CJK KR", sans-serif; text-anchor: middle; paint-order: stroke; stroke: rgba(255, 255, 255, .75); stroke-width: 4px; stroke-linejoin: round; fill: #333; }
.small { font-size: 20.5px; }
.small .ko { font-size: 19px; }
.city { font-size: 27.7px; }
.city .ko { font-size: 27px; }
.ko { font-family: "Noto Sans CJK KR", sans-serif; }
.air { font-family: "Noto Sans CJK KR", sans-serif; font-size: 19.5px; fill: #7a5bbd; }
.air use { stroke: none; }
.park { font-family: "Noto Sans CJK KR", sans-serif; font-size: 19.5px; font-weight: 500; fill: #3b8a4c; }
.shield rect { fill: #e9cdd4; stroke: #d08f9d; stroke-width: 2; }
.shield text { font: 22px "Noto Sans", sans-serif; fill: #6d1c3b; text-anchor: middle; }

.controls { position: absolute; left: 21px; top: 20px; display: flex; flex-direction: column; gap: 20px; }
.ctl { width: 59px; border-radius: 8px; background: #fff; box-shadow: 0 4px 7px rgba(60, 80, 90, .55); overflow: hidden; }
.ctl span { height: 60px; display: flex; align-items: center; justify-content: center; }
.ctl span + span { border-top: 2px solid #d3dae6; }
.two span:first-child { height: 58px; }
.two span + span { height: 62px; padding-bottom: 2px; }
.hover { background: #f5f5f5; }
.ctl svg { width: 32px; height: 32px; }
.legend { position: absolute; left: 1212px; top: 485px; width: 162px; height: 203px; border-radius: 8px; background: rgba(255, 255, 255, .86); box-shadow: 0 4px 7px rgba(60, 80, 90, .35); padding: 17px 0 0 15px; font-size: 22px; font-weight: 500; color: #69707d; }
.legend b { display: block; height: 30px; line-height: 28px; font-size: 22px; letter-spacing: -.3px; }
.legend p { margin: 0; height: 34px; display: flex; align-items: center; white-space: nowrap; letter-spacing: -.15px; }
.legend i { width: 20px; height: 20px; border-radius: 50%; border: 2px solid; margin: 0 9px 0 -1px; flex: none; }
.l1 { background: #fed976; border-color: #cdb05f !important; }
.l2 { background: #fd9d43; border-color: #cb7d35 !important; }
.l3 { background: #fc4e2a; border-color: #c9331b !important; }
.l4 { background: #800026; border-color: #5d001c !important; }
.attrib { position: absolute; right: 0; bottom: 2px; width: 408px; height: 29px; background: rgba(255, 255, 255, .75); font: 22px/28px "Liberation Sans", sans-serif; color: #333; -webkit-text-stroke: .4px #333; white-space: nowrap; padding-left: 1px; }
.focus { position: absolute; right: -8px; bottom: -8px; width: 52px; height: 52px; border: 5px solid rgba(120, 180, 220, .65); background: rgba(253, 236, 200, .55); }

.scroll { width: 34px; background: #f0f0f0; display: flex; flex-direction: column; align-items: center; padding-top: 34px; flex: none; z-index: 2; }
.scroll svg { width: 24px; height: 20px; }
.thumb { width: 30px; height: 1266px; background: #cdcdcd; margin-top: 134px; }
.scroll .down { transform: scaleY(-1); margin-top: 15px; }
```
